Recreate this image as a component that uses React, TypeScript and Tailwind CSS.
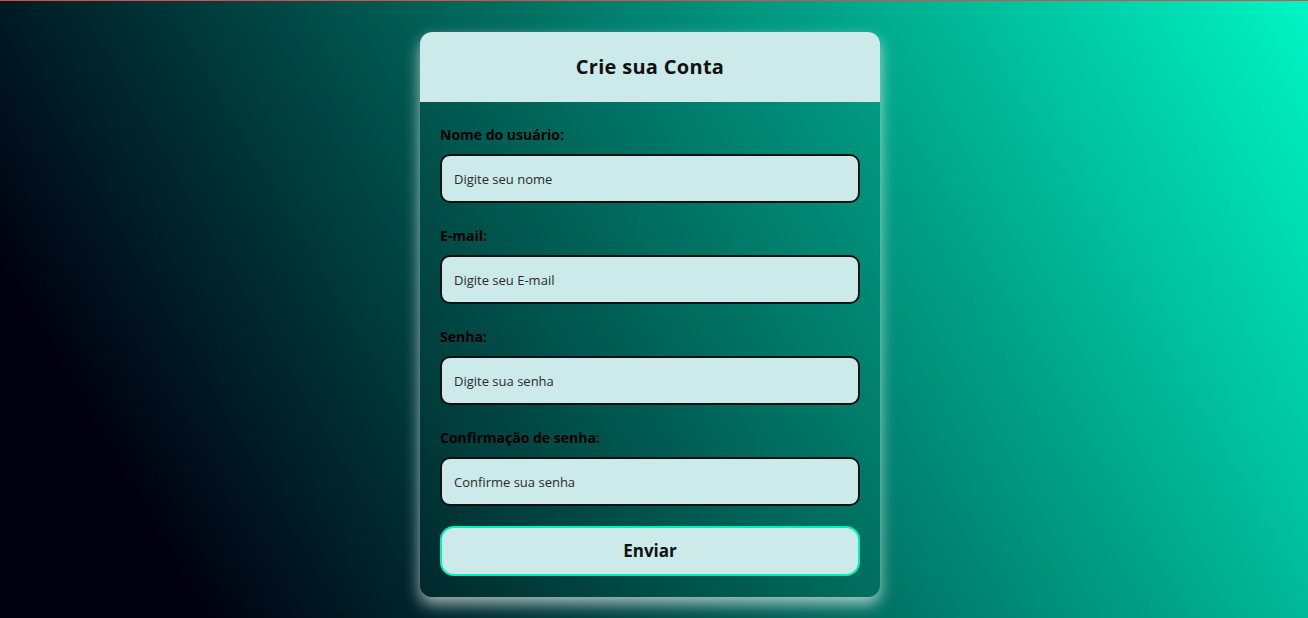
import React from "react";

const fields = [
  { label: "Nome do usuário:", placeholder: "Digite seu nome", type: "text" },
  { label: "E-mail:", placeholder: "Digite seu E-mail", type: "email" },
  { label: "Senha:", placeholder: "Digite sua senha", type: "password" },
  { label: "Confirmação de senha:", placeholder: "Confirme sua senha", type: "password" },
];

export default function App() {
  return (
    <div
      className="relative w-full h-[618px] overflow-hidden bg-[linear-gradient(60deg,#000010_12%,#00f5c4)]"
      style={{ fontFamily: '"Open Sans", "Noto Sans", sans-serif' }}
    >
      <div className="absolute top-0 left-0 right-0 h-px bg-[#d0524a]" />
      <div className="flex justify-center pt-[32px] pr-[8px]">
        <div className="w-[460px] rounded-[12px] overflow-hidden shadow-[0_7px_15px_rgba(255,255,255,0.65)] bg-[rgba(0,60,50,0.08)]">
          <div className="h-[70px] bg-[#cbeae9] flex items-center justify-center">
            <h1 className="text-[20px] font-bold text-[#111] tracking-[0.3px]">Crie sua Conta</h1>
          </div>
          <form className="px-5 pt-[23px] pb-[21px] flex flex-col">
            {fields.map((f, i) => (
              <div key={f.label} className={i === 3 ? "flex flex-col mb-[20px]" : "flex flex-col mb-[23px]"}>
                <label className="text-[14px] leading-[20px] font-bold text-black mb-[9px]">{f.label}</label>
                <input
                  type={f.type}
                  placeholder={f.placeholder}
                  className="h-[49px] w-full rounded-[10px] border-2 border-[#111] bg-[#cbeae9] px-[12px] text-[13px] text-[#222] placeholder:text-[#2a2a2a] outline-none"
                />
              </div>
            ))}
            <button
              type="button"
              className="h-[50px] w-full rounded-[14px] border-2 border-[#00f0c0] bg-[#cbeae9] text-[17px] font-bold text-[#111]"
            >
              Enviar
            </button>
          </form>
        </div>
      </div>
    </div>
  );
}
